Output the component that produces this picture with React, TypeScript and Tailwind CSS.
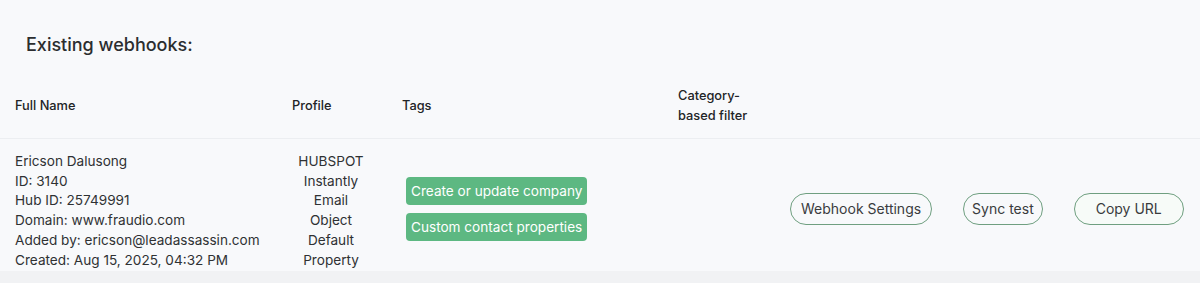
import React from 'react'

const lines = [
  'Ericson Dalusong',
  'ID: 3140',
  'Hub ID: 25749991',
  'Domain: www.fraudio.com',
  'Added by: ericson@leadassassin.com',
  'Created: Aug 15, 2025, 04:32 PM',
]

const profile = ['HUBSPOT', 'Instantly', 'Email', 'Object', 'Default', 'Property']

const tags = ['Create or update company', 'Custom contact properties']

export default function App() {
  return (
    <div
      className="w-[1200px] h-[283px] bg-[#f8f9fb] text-[#2f3133] overflow-hidden"
      style={{ fontFamily: 'Inter, "Noto Sans", sans-serif' }}
    >
      <h2 className="pl-[26px] pt-[33px] h-[75px] text-[18px] leading-[24px] font-medium text-[#2b2d2f]">
        Existing webhooks:
      </h2>

      <table className="w-full border-collapse table-fixed">
        <colgroup>
          <col className="w-[280px]" />
          <col className="w-[110px]" />
          <col className="w-[276px]" />
          <col className="w-[112px]" />
          <col />
        </colgroup>
        <thead>
          <tr className="h-[63px] border-b border-[#eceef1] text-[12.8px] leading-[20px] font-medium text-[#222426]">
            <th className="pl-[15px] text-left font-medium">Full Name</th>
            <th className="pl-[12px] text-left font-medium">Profile</th>
            <th className="pl-[12px] text-left font-medium">Tags</th>
            <th className="pl-[12px] pr-[24px] text-left font-medium">Category-based filter</th>
            <th />
          </tr>
        </thead>
        <tbody>
          <tr className="h-[133px] text-[13.6px] leading-[19.8px]">
            <td className="pl-[15px] pt-[13px] align-middle">
              {lines.map((l) => (
                <div key={l}>{l}</div>
              ))}
            </td>
            <td className="pr-[8px] pt-[13px] text-center align-middle">
              {profile.map((p) => (
                <div key={p}>{p}</div>
              ))}
            </td>
            <td className="pl-[16px] pt-[9px] align-middle">
              <div className="flex flex-col items-start gap-[8px]">
                {tags.map((t) => (
                  <span
                    key={t}
                    className="bg-[#5db882] text-white text-[13.6px] leading-[18px] px-[5px] py-[5px] rounded-[4px] whitespace-nowrap"
                  >
                    {t}
                  </span>
                ))}
              </div>
            </td>
            <td />
            <td className="pl-[12px] pt-[8px] align-middle">
              <div className="flex items-center">
                <button className="h-[32px] px-[10px] rounded-full border border-[#6f9f80] text-[14px] text-[#3a3c3e] bg-transparent whitespace-nowrap">
                  Webhook Settings
                </button>
                <button className="ml-[31px] h-[32px] px-[8px] rounded-full border border-[#6f9f80] text-[14px] text-[#3a3c3e] bg-transparent whitespace-nowrap">
                  Sync test
                </button>
                <button className="ml-[31px] h-[32px] w-[110px] rounded-full border border-[#6f9f80] text-[14px] text-[#3a3c3e] bg-[#f7fbf8] whitespace-nowrap">
                  Copy URL
                </button>
              </div>
            </td>
          </tr>
        </tbody>
      </table>
      <div className="h-[12px] bg-[#f1f2f4]" />
    </div>
  )
}
